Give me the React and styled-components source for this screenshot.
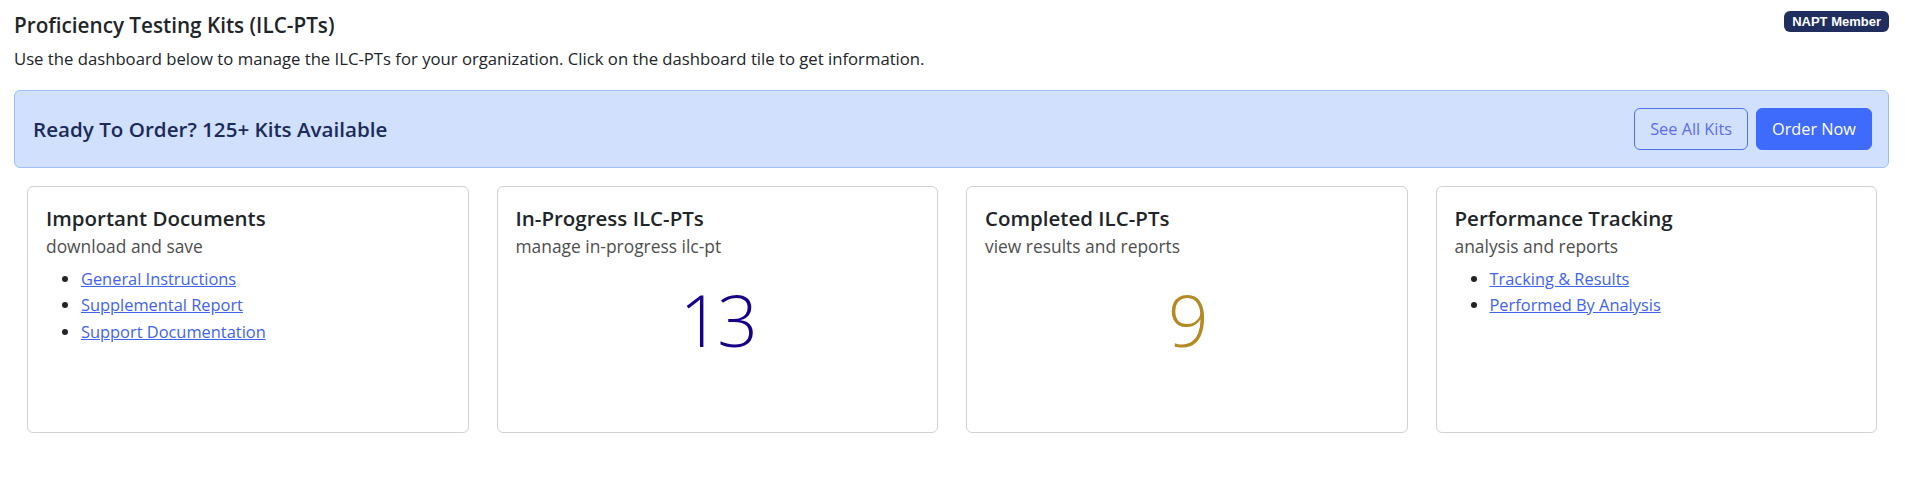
import styled, { createGlobalStyle } from 'styled-components';

const GlobalStyle = createGlobalStyle`
  body {
    margin: 0;
    background: #fff;
    color: #212529;
    font-family: 'Open Sans', 'Noto Sans', sans-serif;
  }
`;

const tiles = [
  {
    title: 'Important Documents',
    sub: 'download and save',
    links: ['General Instructions', 'Supplemental Report', 'Support Documentation'],
  },
  { title: 'In-Progress ILC-PTs', sub: 'manage in-progress ilc-pt', count: 13, color: '#16008a' },
  { title: 'Completed ILC-PTs', sub: 'view results and reports', count: 9, color: '#b68a22' },
  {
    title: 'Performance Tracking',
    sub: 'analysis and reports',
    links: ['Tracking & Results', 'Performed By Analysis'],
  },
];

const App = () => {
  return (
    <Page>
      <GlobalStyle />
      <Header>
        <Title>Proficiency Testing Kits (ILC-PTs)</Title>
        <Badge>NAPT Member</Badge>
      </Header>
      <Lead>
        Use the dashboard below to manage the ILC-PTs for your organization. Click on the dashboard tile to get
        information.
      </Lead>
      <Banner>
        <BannerTitle>Ready To Order? 125+ Kits Available</BannerTitle>
        <Actions>
          <Button>See All Kits</Button>
          <Button $primary>Order Now</Button>
        </Actions>
      </Banner>
      <CardGrid>
        {tiles.map((tile) => (
          <Card key={tile.title}>
            <CardTitle>{tile.title}</CardTitle>
            <CardSub>{tile.sub}</CardSub>
            {tile.links && (
              <LinkList>
                {tile.links.map((link) => (
                  <li key={link}>
                    <a href='#'>{link}</a>
                  </li>
                ))}
              </LinkList>
            )}
            {tile.count !== undefined && <Count $color={tile.color}>{tile.count}</Count>}
          </Card>
        ))}
      </CardGrid>
    </Page>
  );
};

export default App;

const Page = styled.div`
  padding: 11px 16px 20px 14px;
`;

const Header = styled.div`
  display: flex;
  justify-content: space-between;
  align-items: flex-start;
`;

const Title = styled.h1`
  margin: 0;
  font-size: 20.7px;
  font-weight: 600;
  line-height: 28px;
`;

const Badge = styled.span`
  padding: 3px 8px;
  border-radius: 6px;
  background-color: #1f2e5e;
  color: #fff;
  font-family: 'Liberation Sans', Arial, sans-serif;
  font-size: 13px;
  font-weight: 700;
  line-height: 15px;
`;

const Lead = styled.p`
  margin: 7px 0 19px;
  font-size: 16.7px;
  line-height: 25px;
`;

const Banner = styled.div`
  display: flex;
  justify-content: space-between;
  align-items: center;
  box-sizing: border-box;
  height: 78px;
  padding: 0 16px 0 18px;
  border: 1px solid #9fbffa;
  border-radius: 6px;
  background-color: #d1e0fc;
`;

const BannerTitle = styled.h2`
  margin: 0;
  color: #1b2a5a;
  font-size: 20.6px;
  font-weight: 600;
`;

const Actions = styled.div`
  display: flex;
  gap: 8px;
`;

const Button = styled.button`
  box-sizing: border-box;
  height: 42px;
  padding: 0 15px;
  border: 1px solid ${({ $primary }) => ($primary ? '#3f6bfd' : '#4e72f0')};
  border-radius: 6px;
  background-color: ${({ $primary }) => ($primary ? '#3f6bfd' : 'transparent')};
  color: ${({ $primary }) => ($primary ? '#fff' : '#5a6cf0')};
  font-family: inherit;
  font-size: 16.3px;
  cursor: pointer;
`;

const CardGrid = styled.div`
  display: grid;
  grid-template-columns: repeat(4, 1fr);
  gap: 28px;
  margin-top: 18px;
  padding: 0 12px 0 13px;
`;

const Card = styled.div`
  box-sizing: border-box;
  height: 247px;
  padding: 19px 18px;
  border: 1px solid #d2d2d2;
  border-radius: 6px;
`;

const CardTitle = styled.h3`
  margin: 0;
  font-size: 20.5px;
  font-weight: 600;
  line-height: 25px;
`;

const CardSub = styled.div`
  margin-top: 4px;
  color: #4f4f4f;
  font-size: 17.4px;
  font-weight: 400;
  line-height: 23.5px;
`;

const LinkList = styled.ul`
  margin: 7px 0 0;
  padding-left: 35px;
  font-size: 16.4px;
  line-height: 26.5px;

  a {
    color: #4263f0;
  }
`;

const Count = styled.div`
  margin-top: 18px;
  color: ${({ $color }) => $color};
  font-size: 71px;
  font-weight: 300;
  line-height: 86px;
  letter-spacing: -3px;
  text-align: center;
`;
